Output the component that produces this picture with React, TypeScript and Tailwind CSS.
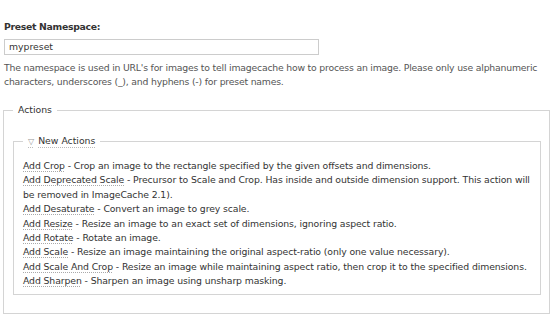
import React from "react"

const actions: [string, string][] = [
  ["Add Crop", "Crop an image to the rectangle specified by the given offsets and dimensions."],
  ["Add Deprecated Scale", "Precursor to Scale and Crop. Has inside and outside dimension support. This action will be removed in ImageCache 2.1)."],
  ["Add Desaturate", "Convert an image to grey scale."],
  ["Add Resize", "Resize an image to an exact set of dimensions, ignoring aspect ratio."],
  ["Add Rotate", "Rotate an image."],
  ["Add Scale", "Resize an image maintaining the original aspect-ratio (only one value necessary)."],
  ["Add Scale And Crop", "Resize an image while maintaining aspect ratio, then crop it to the specified dimensions."],
  ["Add Sharpen", "Sharpen an image using unsharp masking."],
]

export default function App() {
  return (
    <div className="w-[550px] h-[318px] bg-white overflow-hidden pt-[20px] px-[4px] text-[9.3px] leading-[14px] text-[#3a3a3a] font-['DejaVu_Sans',Verdana,sans-serif]">
      <label className="block font-bold text-[#333] tracking-[-0.3px]">Preset Namespace:</label>
      <div className="mt-[5px] w-[315px] h-[16px] border border-[#ccc] px-[4px] leading-[14px] text-[#333]">mypreset</div>
      <p className="mt-[6px] text-[#555] tracking-[-0.2px]">
        The namespace is used in URL's for images to tell imagecache how to process an image. Please only use alphanumeric characters, underscores (_), and hyphens (-) for preset names.
      </p>

      <fieldset className="mt-[14px] -ml-px w-[547px] border border-[#d4d4d4] pl-[9px] pr-[8px] pt-[17px] pb-[18px]">
        <legend className="px-[5px] text-[#333]">Actions</legend>

        <fieldset className="border border-[#d4d4d4] pl-[9px] pr-[3px] pt-[10px] pb-[5px]">
          <legend className="px-[5px]">
            <span className="underline decoration-dotted decoration-[#bbb] underline-offset-[3px] text-[#333]">
              <span className="text-[8px] text-[#999] mr-[4px]">▽</span>New Actions
            </span>
          </legend>
          <div className="leading-[14.4px] text-[#333] tracking-[-0.1px]">
            {actions.map(([name, desc]) => (
              <div key={name}>
                <a className="underline decoration-dotted decoration-[#aaa] underline-offset-[2px]">{name}</a> - {desc}
              </div>
            ))}
          </div>
        </fieldset>
      </fieldset>
    </div>
  )
}
